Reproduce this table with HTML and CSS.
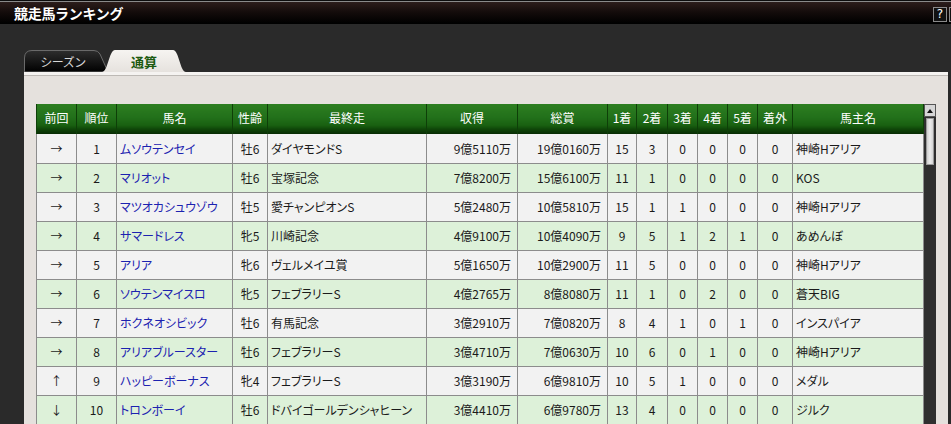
FILE: index.html
```html
<!DOCTYPE html>
<html lang="ja">
<head>
<meta charset="utf-8">
<title>競走馬ランキング</title>
<link rel="stylesheet" href="styles.css">
</head>
<body>
<div class="window">
  <div class="titlebar">
    <h1 class="title">競走馬ランキング</h1>
    <div class="tbtns"><span class="tbtn">?</span><span class="tbtn"></span></div>
  </div>
  <div class="stage">
    <div class="tabs">
      <div class="tab tab-off">
        <svg class="tab-bg" width="84" height="22" viewBox="0 0 84 22">
          <defs><linearGradient id="gOff" x1="0" y1="0" x2="0" y2="1"><stop offset="0" stop-color="#2e2e2e"/><stop offset="1" stop-color="#000"/></linearGradient></defs>
          <path d="M0.5 22 L0.5 8 Q0.5 0.5 8 0.5 L70 0.5 Q74 0.5 76 4 L84 22 Z" fill="url(#gOff)" stroke="#6a6a6a" stroke-width="1"/>
        </svg>
        <span class="tab-label">シーズン</span>
      </div>
      <div class="tab tab-on">
        <svg class="tab-bg" width="84" height="22" viewBox="0 0 84 22">
          <defs><linearGradient id="gOn" x1="0" y1="0" x2="0" y2="1"><stop offset="0" stop-color="#f6f4f1"/><stop offset="1" stop-color="#e6e2de"/></linearGradient></defs>
          <path d="M0 22 C6 22 7 0 13 0 L71 0 C77 0 78 22 84 22 Z" fill="url(#gOn)"/>
        </svg>
        <span class="tab-label">通算</span>
      </div>
    </div>
    <div class="panel">
      <div class="grid-wrap">
        <table class="rank">
          <colgroup>
            <col class="c-prev"><col class="c-rank"><col class="c-name"><col class="c-sex"><col class="c-last"><col class="c-earn"><col class="c-total"><col class="c-n1"><col class="c-n2"><col class="c-n3"><col class="c-n4"><col class="c-n5"><col class="c-out"><col class="c-owner">
          </colgroup>
          <thead>
            <tr><th>前回</th><th>順位</th><th>馬名</th><th>性齢</th><th>最終走</th><th>収得</th><th>総賞</th><th>1着</th><th>2着</th><th>3着</th><th>4着</th><th>5着</th><th>着外</th><th>馬主名</th></tr>
          </thead>
          <tbody>
            <tr><td class="ctr">→</td><td class="ctr">1</td><td class="name">ムソウテンセイ</td><td class="ctr">牡6</td><td class="lft">ダイヤモンドS</td><td class="num">9億5110万</td><td class="num">19億0160万</td><td class="ctr">15</td><td class="ctr">3</td><td class="ctr">0</td><td class="ctr">0</td><td class="ctr">0</td><td class="ctr">0</td><td class="lft">神崎Hアリア</td></tr>
            <tr><td class="ctr">→</td><td class="ctr">2</td><td class="name">マリオット</td><td class="ctr">牡6</td><td class="lft">宝塚記念</td><td class="num">7億8200万</td><td class="num">15億6100万</td><td class="ctr">11</td><td class="ctr">1</td><td class="ctr">0</td><td class="ctr">0</td><td class="ctr">0</td><td class="ctr">0</td><td class="lft">KOS</td></tr>
            <tr><td class="ctr">→</td><td class="ctr">3</td><td class="name">マツオカシュウゾウ</td><td class="ctr">牡5</td><td class="lft">愛チャンピオンS</td><td class="num">5億2480万</td><td class="num">10億5810万</td><td class="ctr">15</td><td class="ctr">1</td><td class="ctr">1</td><td class="ctr">0</td><td class="ctr">0</td><td class="ctr">0</td><td class="lft">神崎Hアリア</td></tr>
            <tr><td class="ctr">→</td><td class="ctr">4</td><td class="name">サマードレス</td><td class="ctr">牝5</td><td class="lft">川崎記念</td><td class="num">4億9100万</td><td class="num">10億4090万</td><td class="ctr">9</td><td class="ctr">5</td><td class="ctr">1</td><td class="ctr">2</td><td class="ctr">1</td><td class="ctr">0</td><td class="lft">あめんぼ</td></tr>
            <tr><td class="ctr">→</td><td class="ctr">5</td><td class="name">アリア</td><td class="ctr">牝6</td><td class="lft">ヴェルメイユ賞</td><td class="num">5億1650万</td><td class="num">10億2900万</td><td class="ctr">11</td><td class="ctr">5</td><td class="ctr">0</td><td class="ctr">0</td><td class="ctr">0</td><td class="ctr">0</td><td class="lft">神崎Hアリア</td></tr>
            <tr><td class="ctr">→</td><td class="ctr">6</td><td class="name">ソウテンマイスロ</td><td class="ctr">牝5</td><td class="lft">フェブラリーS</td><td class="num">4億2765万</td><td class="num">8億8080万</td><td class="ctr">11</td><td class="ctr">1</td><td class="ctr">0</td><td class="ctr">2</td><td class="ctr">0</td><td class="ctr">0</td><td class="lft">蒼天BIG</td></tr>
            <tr><td class="ctr">→</td><td class="ctr">7</td><td class="name">ホクネオシビック</td><td class="ctr">牡6</td><td class="lft">有馬記念</td><td class="num">3億2910万</td><td class="num">7億0820万</td><td class="ctr">8</td><td class="ctr">4</td><td class="ctr">1</td><td class="ctr">0</td><td class="ctr">1</td><td class="ctr">0</td><td class="lft">インスパイア</td></tr>
            <tr><td class="ctr">→</td><td class="ctr">8</td><td class="name">アリアブルースター</td><td class="ctr">牡6</td><td class="lft">フェブラリーS</td><td class="num">3億4710万</td><td class="num">7億0630万</td><td class="ctr">10</td><td class="ctr">6</td><td class="ctr">0</td><td class="ctr">1</td><td class="ctr">0</td><td class="ctr">0</td><td class="lft">神崎Hアリア</td></tr>
            <tr><td class="ctr">↑</td><td class="ctr">9</td><td class="name">ハッピーボーナス</td><td class="ctr">牝4</td><td class="lft">フェブラリーS</td><td class="num">3億3190万</td><td class="num">6億9810万</td><td class="ctr">10</td><td class="ctr">5</td><td class="ctr">1</td><td class="ctr">0</td><td class="ctr">0</td><td class="ctr">0</td><td class="lft">メダル</td></tr>
            <tr><td class="ctr">↓</td><td class="ctr">10</td><td class="name">トロンボーイ</td><td class="ctr">牡6</td><td class="lft">ドバイゴールデンシャヒーン</td><td class="num">3億4410万</td><td class="num">6億9780万</td><td class="ctr">13</td><td class="ctr">4</td><td class="ctr">0</td><td class="ctr">0</td><td class="ctr">0</td><td class="ctr">0</td><td class="lft">ジルク</td></tr>
          </tbody>
        </table>
        <div class="scrollbar">
          <div class="sb-up"><svg width="6" height="4" viewBox="0 0 6 4"><path d="M0 4 L3 0 L6 4 Z" fill="#111"/></svg></div>
          <div class="sb-thumb"></div>
        </div>
      </div>
    </div>
  </div>
</div>
</body>
</html>
```
FILE: styles.css
```css
* { box-sizing: border-box; }
html, body {
  margin: 0;
  padding: 0;
}
body {
  width: 951px;
  height: 424px;
  overflow: hidden;
  background: #2a2a2a;
  font-family: "Noto Sans CJK JP", "Noto Sans", sans-serif;
  font-size: 12px;
  color: #1a1a1a;
}
.window {
  width: 951px;
  height: 424px;
  display: flex;
  flex-direction: column;
}
.titlebar {
  height: 24px;
  flex: none;
  border-top: 1px solid #0c0c0c;
  background: linear-gradient(#8a8a8a 0, #8a8a8a 1px, #2c1d1b 1px, #140c0b 11px, #000 22px);
  display: flex;
  align-items: center;
  justify-content: space-between;
}
.title {
  margin: 0 0 0 14px;
  font-size: 14px;
  font-weight: 700;
  color: #fff;
  line-height: 1;
  letter-spacing: -0.3px;
}
.tbtns {
  display: flex;
  gap: 2px;
  margin-right: -12px;
  margin-top: 3px;
}
.tbtn {
  width: 14px;
  height: 15px;
  border: 1px solid #8a8a8a;
  background: #111;
  color: #fff;
  font-family: "DejaVu Sans", sans-serif;
  font-size: 12px;
  line-height: 13px;
  text-align: center;
}
.stage {
  flex: 1;
  display: flex;
  flex-direction: column;
  min-height: 0;
}
.tabs {
  display: flex;
  margin-top: 26px;
  padding-left: 24px;
  height: 22px;
  align-items: flex-end;
}
.tab {
  display: grid;
  align-items: center;
  justify-items: center;
  height: 22px;
}
.tab > * { grid-area: 1 / 1; }
.tab-bg { display: block; }
.tab-off .tab-label {
  color: #d8d8d8;
  font-size: 12px;
  padding-right: 6px;
  letter-spacing: -0.5px;
}
.tab-on {
  margin-left: -6px;
}
.tab-on .tab-label {
  color: #1c5a10;
  font-weight: 700;
  font-size: 13px;
}
.panel {
  flex: 1;
  min-height: 0;
  margin: 0 3px 0 24px;
  background: #e5e1dd;
  border-top: 3px solid #f5f3f1;
  box-shadow: inset 0 1px 0 #bdb9b5;
  padding: 29px 13px 0 12px;
  overflow: hidden;
}
.grid-wrap {
  display: flex;
  align-items: stretch;
  height: 100%;
}
.rank {
  border-collapse: collapse;
  table-layout: fixed;
  width: 887px;
  flex: none;
  align-self: flex-start;
}
.c-prev { width: 40px; }
.c-rank { width: 40px; }
.c-name { width: 116px; }
.c-sex { width: 35px; }
.c-last { width: 159px; }
.c-earn { width: 91px; }
.c-total { width: 90px; }
.c-n1 { width: 29px; }
.c-n2 { width: 31px; }
.c-n3 { width: 30px; }
.c-n4 { width: 30px; }
.c-n5 { width: 30px; }
.c-out { width: 35px; }
.c-owner { width: 131px; }
.rank th {
  height: 30px;
  padding: 0 0 4px;
  color: #fff;
  font-weight: 400;
  font-size: 12px;
  text-align: center;
  background: linear-gradient(#2d7e20 0%, #22701a 45%, #185f10 72%, #0f4608 84%, #082c04 100%);
  border-left: 1px solid #0e3f08;
  border-right: 1px solid #0e3f08;
  white-space: nowrap;
}
.rank td {
  height: 29px;
  border: 1px solid #8c8c8c;
  padding: 0;
  white-space: nowrap;
  overflow: hidden;
  font-feature-settings: "palt";
}
.rank tbody tr:nth-child(odd) td { background: #f2f2f2; }
.rank tbody tr:nth-child(even) td { background: #ddf1d9; }
.rank tbody tr:first-child td { border-top: none; }
.ctr { text-align: center; }
.lft { text-align: left; padding-left: 3px !important; }
.name { text-align: left; padding-left: 3px !important; color: #1c22b0; }
.num { text-align: right; padding-right: 6px !important; font-feature-settings: normal; }
.scrollbar {
  width: 12px;
  flex: none;
  background: #2f2f2f;
  display: flex;
  flex-direction: column;
  align-items: center;
}
.sb-up {
  width: 12px;
  height: 13px;
  background: #d6d6d6;
  border: 1px solid #555;
  display: flex;
  align-items: center;
  justify-content: center;
}
.sb-thumb {
  width: 8px;
  height: 47px;
  margin-top: 1px;
  background: linear-gradient(90deg, #cfcfcf, #ececec 50%, #d4d4d4);
  border: 1px solid #9a9a9a;
}
```
